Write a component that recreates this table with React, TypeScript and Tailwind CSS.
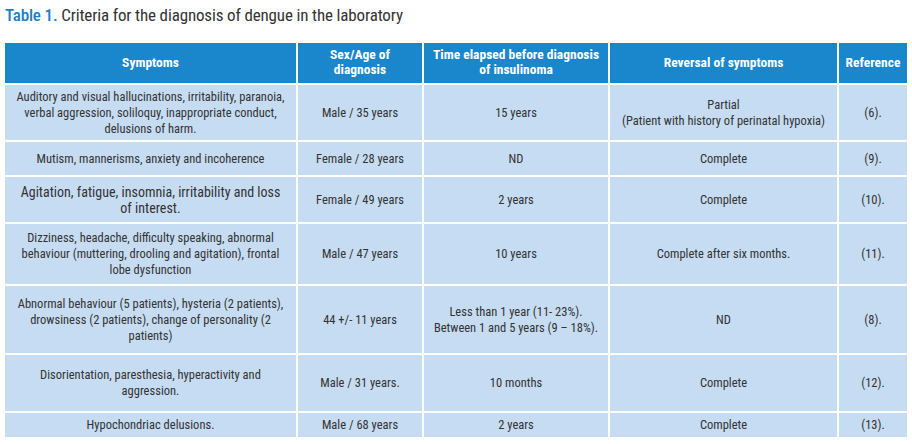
type Row = {
  cells: string[][];
  h: string;
  big?: boolean;
};

const rows: Row[] = [
  {
    h: "h-[55px]",
    cells: [
      [
        "Auditory and visual hallucinations, irritability, paranoia,",
        "verbal aggression, soliloquy, inappropriate conduct,",
        "delusions of harm.",
      ],
      ["Male / 35 years"],
      ["15 years"],
      ["Partial", "(Patient with history of perinatal hypoxia)"],
      ["(6)."],
    ],
  },
  {
    h: "h-[33px]",
    cells: [
      ["Mutism, mannerisms, anxiety and incoherence"],
      ["Female / 28 years"],
      ["ND"],
      ["Complete"],
      ["(9)."],
    ],
  },
  {
    h: "h-[45px]",
    big: true,
    cells: [
      ["Agitation, fatigue, insomnia, irritability and loss", "of interest."],
      ["Female / 49 years"],
      ["2 years"],
      ["Complete"],
      ["(10)."],
    ],
  },
  {
    h: "h-[60px]",
    cells: [
      [
        "Dizziness, headache, difficulty speaking, abnormal",
        "behaviour (muttering, drooling and agitation), frontal",
        "lobe dysfunction",
      ],
      ["Male / 47 years"],
      ["10 years"],
      ["Complete after six months."],
      ["(11)."],
    ],
  },
  {
    h: "h-[67px]",
    cells: [
      [
        "Abnormal behaviour (5 patients), hysteria (2 patients),",
        "drowsiness (2 patients), change of personality (2",
        "patients)",
      ],
      ["44 +/- 11 years"],
      ["Less than 1 year (11- 23%).", "Between 1 and 5 years (9 – 18%)."],
      ["ND"],
      ["(8)."],
    ],
  },
  {
    h: "h-[56px]",
    cells: [
      ["Disorientation, paresthesia, hyperactivity and", "aggression."],
      ["Male / 31 years."],
      ["10 months"],
      ["Complete"],
      ["(12)."],
    ],
  },
  {
    h: "h-[24px]",
    cells: [
      ["Hypochondriac delusions."],
      ["Male / 68 years"],
      ["2 years"],
      ["Complete"],
      ["(13)."],
    ],
  },
];

const headers = [
  ["Symptoms"],
  ["Sex/Age of", "diagnosis"],
  ["Time elapsed before diagnosis", "of insulinoma"],
  ["Reversal of symptoms"],
  ["Reference"],
];

export default function App() {
  return (
    <div className="w-[912px] h-[444px] bg-white pl-[5px] pt-[3px] font-['Roboto_Condensed',_'Liberation_Sans',_sans-serif]">
      <h1 className="text-[17px] tracking-[-0.15px] leading-[24px] text-[#333333] mb-[16px]">
        <span className="font-medium text-[#1a80c6]">Table 1.</span> Criteria for the diagnosis of dengue in
        the laboratory
      </h1>

      <div className="grid grid-cols-[291px_124px_184px_227px_68px] gap-[2px]">
        {headers.map((lines, i) => (
          <div
            key={i}
            className="h-[40px] pb-[2px] bg-[#1a86cc] text-white font-bold text-[13.5px] leading-[15px] flex flex-col items-center justify-center text-center"
          >
            {lines.map((l) => (
              <span key={l}>{l}</span>
            ))}
          </div>
        ))}

        {rows.map((row, r) =>
          row.cells.map((lines, c) => (
            <div
              key={`${r}-${c}`}
              className={`${row.h} bg-[#c6dcf2] text-[#333333] flex flex-col items-center justify-center text-center ${
                row.big && c === 0 ? "text-[14px] leading-[16px]" : "text-[12.5px] leading-[16px]"
              }`}
            >
              {lines.map((l) => (
                <span key={l} className="whitespace-nowrap">
                  {l}
                </span>
              ))}
            </div>
          ))
        )}
      </div>
    </div>
  );
}
